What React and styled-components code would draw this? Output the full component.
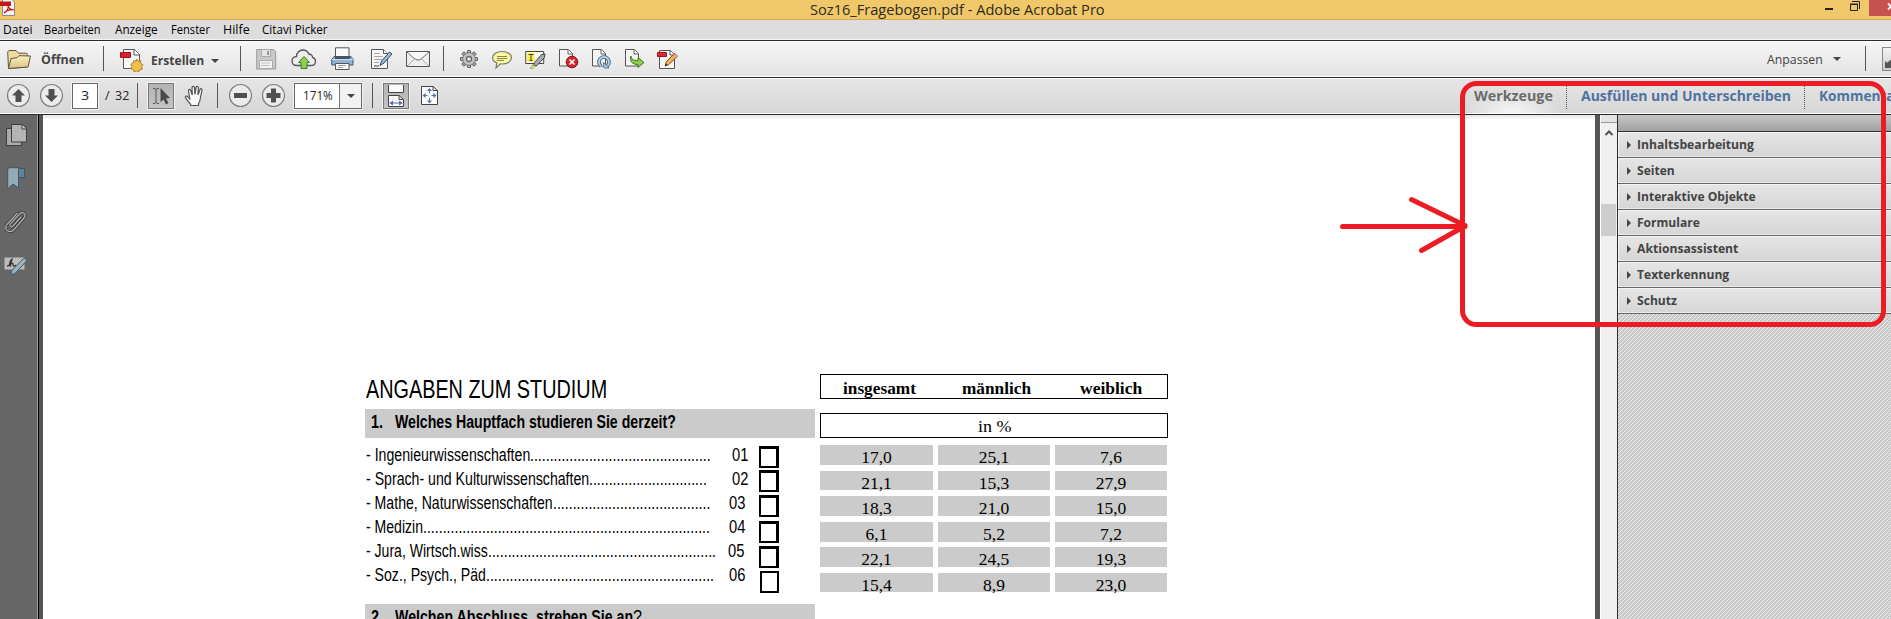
import React, { useLayoutEffect, useRef, useState } from "react";
import styled, { createGlobalStyle } from "styled-components";

const UI = '"Open Sans", "Noto Sans", sans-serif';
const NARROW = '"Liberation Sans Narrow", "Liberation Sans", sans-serif';
const SERIF = '"Liberation Serif", serif';

const Global = createGlobalStyle`
  * { box-sizing: border-box; }
  body { margin: 0; overflow: hidden; font-family: ${UI}; }
`;

/* ---------- text fitted to a given width ---------- */

const FitBox = styled.span`
  display: block;
  flex: none;
  width: ${(p) => p.$w}px;
  margin-left: ${(p) => p.$gap || 0}px;
  font-family: ${(p) => p.$font || UI};
  font-size: ${(p) => p.$size}px;
  font-weight: ${(p) => p.$weight || 400};
  line-height: ${(p) => p.$line}px;
  color: ${(p) => p.$color || "#000"};
  white-space: pre;
`;
const FitInner = styled.span`
  display: inline-block;
  transform-origin: 0 50%;
`;

function Fit({ w, gap, font, size, weight, line, color, children }) {
  const ref = useRef(null);
  const [scale, setScale] = useState(1);
  useLayoutEffect(() => {
    setScale(w / ref.current.offsetWidth);
  }, [w, children]);
  return (
    <FitBox $w={w} $gap={gap} $font={font} $size={size} $weight={weight} $line={line} $color={color}>
      <FitInner ref={ref} style={{ transform: `scaleX(${scale})` }}>{children}</FitInner>
    </FitBox>
  );
}

/* ---------- window frame ---------- */

const Window = styled.div`
  position: relative;
  width: 1891px;
  height: 619px;
  overflow: hidden;
  display: flex;
  flex-direction: column;
  background: #fff;
`;
const TitleBar = styled.header`
  display: flex;
  flex: none;
  height: 20px;
  background: #f0c869;
  border-bottom: 1px solid #d8a953;
`;
const MenuBar = styled.nav`
  display: flex;
  flex: none;
  height: 20px;
  background: #ddd;
  border-bottom: 1px solid #f4f4f4;
`;
const Toolbar = styled.div`
  display: flex;
  align-items: flex-start;
  flex: none;
  height: ${(p) => p.$h}px;
  border-top: 1px solid #2b2b2b;
  box-shadow: inset 0 1px #fff, inset 0 -1px #fff;
  background: linear-gradient(${(p) => p.$from}, ${(p) => p.$to});
`;
const Divider = styled.i`
  flex: none;
  width: 1px;
  height: 25px;
  margin: 5px 0 0 ${(p) => p.$gap}px;
  background: #555;
`;
const DottedDivider = styled.i`
  flex: none;
  width: 1px;
  height: 23px;
  margin: 8px 0 0 ${(p) => p.$gap}px;
  background: repeating-linear-gradient(#555 0 1px, transparent 1px 2px);
`;
const Icon = styled.svg`
  display: block;
  flex: none;
  margin: ${(p) => p.$top || 0}px 0 0 ${(p) => p.$gap || 0}px;
`;
const Caret = styled.i`
  flex: none;
  align-self: flex-start;
  margin: ${(p) => p.$top}px 0 0 ${(p) => p.$gap}px;
  border: solid transparent;
  border-width: 4px 4px 0;
  border-top-color: #444;
`;
const CloseButton = styled.div`
  flex: none;
  width: 22px;
  height: 16px;
  margin-left: 9px;
  background: #c75050;
`;
const HistoryButton = styled.div`
  flex: none;
  width: 10px;
  height: 24px;
  margin: 6px 0 0 16px;
  border: 1px solid #888;
  border-right: 0;
  background: linear-gradient(#f4f4f4, #ccc);
`;
const Field = styled.div`
  display: flex;
  flex: none;
  width: ${(p) => p.$w}px;
  height: 26px;
  margin: 5px 0 0 ${(p) => p.$gap}px;
  border: 1px solid #666;
  outline: 1px solid #f3f3f3;
  background: #fff;
`;
const FieldDrop = styled.div`
  display: flex;
  width: 23px;
  height: 24px;
  margin-left: 6px;
  border-left: 1px solid #777;
  background: #f2f2f2;
`;
const PressedTool = styled.div`
  flex: none;
  width: 26px;
  height: 26px;
  margin: 5px 0 0 ${(p) => p.$gap}px;
  border: 1px solid #777;
  outline: 1px solid #f3f3f3;
  background: linear-gradient(#b4b4b4, #c4c4c4);
`;
const ActiveTab = styled.div`
  display: flex;
  flex: none;
  width: 102px;
  height: 35px;
  margin-left: 1022px;
  background: radial-gradient(ellipse 50px 22px at 51px 36px, #f8f8f8, transparent);
`;

/* ---------- work area ---------- */

const Work = styled.main`
  display: flex;
  flex: none;
  height: 505px;
  border-top: 1px solid #2b2b2b;
`;
const Rail = styled.aside`
  flex: none;
  width: 39px;
  background: #666;
  border-right: 1px solid #000;
  box-shadow: inset -1px 0 #a0a0a0;
`;
const Canvas = styled.div`
  display: flex;
  flex: none;
  width: 1561px;
  padding: 0 5px 0 4px;
  background: #555;
`;
const Page = styled.article`
  display: flex;
  align-items: flex-start;
  width: 1552px;
  height: 504px;
  padding-left: 322px;
  overflow: hidden;
  background: linear-gradient(#e6e6e6, #fff 5px);
`;
const Scrollbar = styled.div`
  flex: none;
  width: 17px;
  height: 504px;
  background: #f0f0f0;
  border-left: 1px solid #fff;
`;
const Splitter = styled.div`
  height: 8px;
  background: #e4e4e4;
  border-bottom: 1px solid #999;
`;
const Thumb = styled.div`
  width: 15px;
  height: 32px;
  margin-top: 65px;
  background: #cdcdcd;
`;
const Panel = styled.aside`
  flex: 1;
  border-left: 1px solid #2b2b2b;
`;
const PanelHead = styled.div`
  height: 17px;
  background: linear-gradient(#c6c6c6, #a2a2a2);
  border-bottom: 1px solid #333;
`;
const PanelItem = styled.div`
  display: flex;
  height: 26px;
  background: linear-gradient(#e6e6e6, #d5d5d5);
  border-bottom: 1px solid #666;
  box-shadow: inset 1px 1px #f4f4f4, inset 0 -1px #ececec;
`;
const ItemArrow = styled.i`
  align-self: flex-start;
  margin: 9px 0 0 9px;
  border: solid transparent;
  border-width: 4px 0 4px 4px;
  border-left-color: #444;
`;
const Hatch = styled.svg`
  display: block;
  width: 273px;
  height: 305px;
`;

/* ---------- questionnaire ---------- */

const Form = styled.section`
  width: 450px;
  padding-top: 259px;
`;
const Heading = styled.div`
  height: 35px;
`;
const Question = styled.div`
  display: flex;
  height: 29px;
  padding-left: 6px;
  background: #cbcbcb;
`;
const Answers = styled.div`
  display: flex;
  height: 166px;
`;
const AnswerList = styled.div`
  width: 394px;
  padding-top: 5px;
`;
const Answer = styled.div`
  display: flex;
  height: 24px;
`;
const Boxes = styled.div`
  padding-top: 8px;
`;
const Box = styled.div`
  width: ${(p) => (p.$last ? 19 : 20)}px;
  height: 22px;
  margin-left: ${(p) => (p.$last ? 1 : 0)}px;
  margin-bottom: ${(p) => p.$after}px;
  border: solid #000;
  border-width: ${(p) => (p.$last ? "2px" : "3px 3px 2px 2px")};
`;
const Results = styled.section`
  width: 348px;
  margin-left: 5px;
  padding-top: 259px;
`;
const Frame = styled.div`
  display: flex;
  height: 25px;
  border: 1px solid #000;
  margin-bottom: ${(p) => p.$after}px;
`;
const ResultRow = styled.div`
  display: grid;
  grid-template-columns: 113px 112px 112px;
  grid-template-rows: ${(p) => p.$h}px;
  column-gap: 5px;
  height: ${(p) => p.$h}px;
  margin-bottom: ${(p) => p.$after}px;
`;
const Cell = styled.div`
  background: #cbcbcb;
  font: 17.5px/24px ${SERIF};
  text-align: center;
`;

const Annotation = styled.svg`
  position: absolute;
  left: 0;
  top: 0;
  pointer-events: none;
`;

/* ---------- icon drawings ---------- */

const INK = "#555";

const Sheet = ({ x = 0, y = 0 }) => (
  <g transform={`translate(${x} ${y})`}>
    <path d="M.5.5h9l4 4v12.500h-13z" fill="#f4f4f4" stroke={INK} />
    <path d="M9 .5v4.500h4.500" fill="#fff" stroke={INK} strokeWidth=".9" />
  </g>
);

const AppIcon = () => (
  <Icon width="16" height="16" viewBox="0 0 16 16">
    <path d="M2.500 -1h9l3 3v13.500h-12z" fill="#f8f4f4" stroke="#888" />
    <path d="M0 1.500h11v4.500H0z" fill="#c4161c" />
    <path d="M4 13c4-2 5-6 4-9 0 4 3 6 6 6-3-1-7 0-10 3z" fill="none" stroke="#b11" strokeWidth="1.200" />
  </Icon>
);
const FolderIcon = () => (
  <Icon $gap={7} $top={6} width="25" height="24" viewBox="0 0 25 24">
    <defs>
      <linearGradient id="fold" x2="0" y2="1"><stop stopColor="#fbf0c0" /><stop offset="1" stopColor="#dcc283" /></linearGradient>
    </defs>
    <path d="M1.500 21.500 .7 5 2 3.500h7l2.500 2.700h8l.8 1V20z" fill="#eedc9f" stroke="#5d5640" />
    <path d="M1.500 21.500 4 11.500l6-.8 2-2L23.500 9l-2.500 11z" fill="url(#fold)" stroke="#5d5640" />
  </Icon>
);
const CreateIcon = () => (
  <Icon $gap={16} $top={6} width="24" height="25" viewBox="0 0 24 25">
    <path d="M3.500 2.500h11l5 5v14h-16z" fill="#f8f8f8" stroke={INK} />
    <path d="M14 2.500v5.500h5.500" fill="#fff" stroke={INK} />
    <path d="M.5 5.500h10v5H.5z" fill="#d9222a" stroke="#a0151b" />
    <path d="m16.500 12 1.500 2.300 2.700-.6v2.700l2.300 1.400-1.500 2 .8 2.400-2.600.6-1 2.200-2.200-1.200-2.400 1-.8-2.300-2.400-.8 1-2.300-1-2.200 2.300-1.200.6-2.300 2.200.5z" fill="#f2c14a" stroke="#a87c25" strokeWidth=".9" />
  </Icon>
);
const SaveIcon = () => (
  <Icon $gap={15} $top={6} width="21" height="24" viewBox="0 0 21 24">
    <path d="M.7 2.500h17l2 2v17.500H.7z" fill="#c9c9c9" stroke="#999" />
    <path d="M5.500 2.500h9v7h-9z" fill="#e6e6e6" stroke="#aaa" />
    <path d="M11 4h2v4h-2z" fill="#999" />
    <path d="M3.500 13.500h13v8h-13z" fill="#f2f2f2" stroke="#aaa" />
    <path d="M5.500 16h9M5.500 18.500h9" stroke="#aaa" strokeDasharray="2 1" />
  </Icon>
);
const CloudIcon = () => (
  <Icon $gap={14} $top={6} width="26" height="24" viewBox="0 0 26 24">
    <path d="M6 18.500C2.500 18.500 1 16.500 1 14s2-4.500 4.500-4.500C5.500 5.500 8.500 3 12 3c3 0 5 1.800 6 4.300 2-.3 3.500 1.200 3.500 3 2 .5 3 2 3 4 0 2.500-1.500 4.200-4 4.200z" fill="#eee" stroke={INK} strokeWidth="1.300" />
    <path d="m13 9.500 5.500 6H16v6h-6v-6H7.500z" fill="#8fd14f" stroke="#3d7a1d" />
  </Icon>
);
const PrintIcon = () => (
  <Icon $gap={14} $top={6} width="23" height="24" viewBox="0 0 23 24">
    <path d="M4.500.8h13.500v10H4.500z" fill="#fafafa" stroke={INK} />
    <path d="M3 9.500h17l2 3V18H.8v-5.500z" fill="#8eb4d6" stroke="#3d5874" />
    <path d="M1 12.500h21" stroke="#c7def0" />
    <path d="M4 11h15" stroke="#333" strokeWidth="1.500" />
    <path d="M4.500 16.500h13.500v6H4.500z" fill="#fafafa" stroke={INK} />
    <path d="M7 18.500h8M7 20.500h5" stroke="#999" />
  </Icon>
);
const SignIcon = () => (
  <Icon $gap={17} $top={6} width="22" height="24" viewBox="0 0 22 24">
    <path d="M.5 2.500h12l4 4v15H.5z" fill="#f6f6f6" stroke={INK} />
    <path d="M12.500 2.500v4h4" fill="#fff" stroke={INK} />
    <path d="M3 6.500h6M3 9.500h9M3 12.500h8M3 15.500h5" stroke="#aaa" />
    <path d="M3 19.500c2-2 3 1 5-1" fill="none" stroke="#333" />
    <path d="m9 18.500 1.500-4.500L18.500 5l2.500 2-8 9z" fill="#93b7d8" stroke="#35506c" />
  </Icon>
);
const MailIcon = () => (
  <Icon $gap={13} $top={6} width="25" height="24" viewBox="0 0 25 24">
    <path d="M.5 4.500h23v15H.5z" fill="#efefef" stroke={INK} />
    <path d="m1 19 8.500-8M23 19l-8.500-8" stroke="#aaa" />
    <path d="M1 5c4 3.500 8 8 11 8s7-4.500 11-8" fill="#f8f8f8" stroke="#666" />
  </Icon>
);
const GearIcon = () => (
  <Icon $gap={16} $top={6} width="19" height="24" viewBox="0 0 19 24">
    {[0, 45, 90, 135].map((a) => (
      <path key={a} d="M7.500 3.500h3v17h-3z" transform={`rotate(${a} 9 12)`} fill="#bbb" stroke="#666" />
    ))}
    <circle cx="9" cy="12" r="6.300" fill="#bdbdbd" stroke="#666" />
    <circle cx="9" cy="12" r="5.800" fill="#c2c2c2" />
    <circle cx="9" cy="12" r="2.500" fill="#eee" stroke="#666" strokeWidth="1.300" />
  </Icon>
);
const CommentIcon = () => (
  <Icon $gap={13} $top={6} width="21" height="24" viewBox="0 0 21 24">
    <path d="M10 4.500c5.500 0 9.500 2.700 9.500 6.200s-4 6.300-9.500 6.300l-1.500-.1-4.500 4 .8-5C2 14.800.6 13 .6 10.700.6 7.200 4.500 4.500 10 4.500z" fill="#fbf8a0" stroke="#777" strokeWidth="1.200" />
    <path d="M5 9.500h10M5 11.500h10M5 13.500h7" stroke="#8a8550" />
  </Icon>
);
const HighlightIcon = () => (
  <Icon $gap={12} $top={6} width="21" height="24" viewBox="0 0 21 24">
    <path d="M.7 4.500h18v12H.7z" fill="#fff" stroke="#444" />
    <path d="M2 6h7.500v8.500H2z" fill="#ffef3a" />
    <path d="M3.500 7.500h5M6 7.500v6M4.500 13.500h3" stroke="#444" />
    <path d="m8 19 1.500-3.500 7-8 3.500-.5-.5 3.500-7.500 8z" fill="#a9a9a9" stroke="#444" />
    <path d="m5 21.500 3-4 2 2-2 2z" fill="#e6e33a" stroke="#888" strokeWidth=".6" />
  </Icon>
);
const DeleteIcon = () => (
  <Icon $gap={13} $top={6} width="20" height="24" viewBox="0 0 20 24">
    <Sheet x={0} y={2} />
    <circle cx="13" cy="15" r="5.800" fill="#d8232a" stroke="#8d1216" />
    <path d="m10.500 12.500 5 5m0-5-5 5" stroke="#fff" strokeWidth="1.600" />
  </Icon>
);
const RotateIcon = () => (
  <Icon $gap={13} $top={6} width="20" height="24" viewBox="0 0 20 24">
    <Sheet x={0} y={2} />
    <path d="M9 19a5 5 0 1 1 6 0" fill="none" stroke="#3f6486" strokeWidth="3.600" />
    <path d="M9 19a5 5 0 1 1 6 0" fill="none" stroke="#b5d3ea" strokeWidth="1.800" />
    <path d="m11.500 15.500.5 5.500h5z" fill="#b5d3ea" stroke="#3f6486" strokeWidth=".8" />
  </Icon>
);
const ExtractIcon = () => (
  <Icon $gap={13} $top={6} width="20" height="24" viewBox="0 0 20 24">
    <Sheet x={0} y={2} />
    <path d="M6 9c0 3 2 4.500 7 4.500v-3l6 5-6 5v-3C7.500 17.500 4 14 6 9z" fill="#8fcc4c" stroke="#3a741c" />
  </Icon>
);
const EditPdfIcon = () => (
  <Icon $gap={12} $top={6} width="21" height="24" viewBox="0 0 21 24">
    <path d="M2.500 3.500h11l4 4v14h-15z" fill="#f8f8f8" stroke={INK} />
    <path d="M13 3.500v4.500h4.500" fill="#fff" stroke={INK} />
    <path d="M.5 5.500h9v4h-9z" fill="#e3263a" stroke="#a0151b" />
    <path d="m8 19 1.500-4.500 8-8 3 2.500-8.500 8.500z" fill="#f0b15b" stroke="#7c4f1d" />
    <path d="m8 19 .8-2.500 1.500 1.500z" fill="#222" />
    <path d="m16 8 3 2.500 1.500-1.500-3-2.500z" fill="#e79a93" />
  </Icon>
);

const ROUND_SHAPES = {
  up: "M12 5.500 18.500 12H15v6.500H9V12H5.500z",
  down: "M12 18.500 18.500 12H15V5.500H9V12H5.500z",
  minus: "M5.500 9.500h13v5h-13z",
  plus: "M9.500 5h5v4.500H19v5h-4.500V19h-5v-4.500H5v-5h4.500z",
};
const RoundIcon = ({ kind, gap }) => (
  <Icon $gap={gap} $top={5} width="24" height="25" viewBox="-.5 -.5 24 25">
    <circle cx="12" cy="12" r="11" fill="#ececec" stroke="#808080" strokeWidth="1.200" />
    <path d={ROUND_SHAPES[kind]} fill="#505050" />
  </Icon>
);
const SelectIcon = () => (
  <svg width="24" height="24" viewBox="0 0 24 24" display="block">
    <path d="M4 4.500h2l1 1 1-1h2M7 5v14M4 19.500h2l1-1 1 1h2" fill="none" stroke="#555" />
    <path d="M11.500 4v14l3-2.500 2.500 5 2.500-1.500-2.500-4.500 4-.5z" fill="#4a4a4a" />
  </svg>
);
const HandIcon = () => (
  <Icon $gap={10} $top={7} width="21" height="22" viewBox="0 0 21 22">
    <path d="M7 20.500c0-2-4-4.500-5.500-8-.5-1.500 1.500-2 2.500-.5l2 2.500L4.500 6c-.3-1.800 1.800-2.200 2.200-.5L8.300 10 8 2.800c0-1.800 2.300-1.800 2.500 0l.5 6.700L12 2.500c.3-1.700 2.400-1.400 2.300.3L14 10l2-5.500c.6-1.500 2.400-.8 2 .8L16.500 12c-.3 3-.5 5-2 6.500v2z" fill="#fafafa" stroke="#555" strokeWidth="1.200" />
  </Icon>
);
const FitWidthIcon = () => (
  <svg width="24" height="24" viewBox="0 0 24 24" display="block">
    <path d="M4.500 1v7.500h15V1" fill="#fafafa" stroke="#444" />
    <path d="M4.500 22.500v-11H15l4.500 4v7z" fill="#fafafa" stroke="#444" />
    <path d="M15 11.500v4h4.500" fill="none" stroke="#444" />
    <path d="M6 19h12" stroke="#5570b0" />
    <path d="m9 16.500-3.500 2.500L9 21.500zM15 16.500l3.500 2.500-3.500 2.500z" fill="#5570b0" />
  </svg>
);
const FitPageIcon = () => (
  <Icon $gap={12} $top={7} width="18" height="21" viewBox="0 0 18 21">
    <path d="M.5 1.500H12l4.500 4V19.500H.5z" fill="#fafafa" stroke="#444" />
    <path d="M12 1.500v4h4.500" fill="none" stroke="#444" />
    <path d="M8.500 4v4.500M8.500 13v4.500M2.500 10.500h4M10.500 10.500h4" stroke="#5570b0" />
    <path d="m6 6 2.500-3L11 6zM6 15.500l2.500 3 2.500-3zM4.500 8l-3 2.500 3 2.500zM12.500 8l3 2.500-3 2.500z" fill="#5570b0" />
  </Icon>
);

const PagesIcon = () => (
  <Icon $gap={6} $top={9} width="22" height="24" viewBox="0 0 22 24">
    <path d="M.5 4.500h15v17H.5z" fill="#aaa" stroke="#3c3c3c" />
    <path d="M5.500.5h11l4 4v13.500h-15z" fill="#b4b4b4" stroke="#3c3c3c" />
    <path d="M16 1v4h4.500" fill="#ccc" stroke="#3c3c3c" />
  </Icon>
);
const BookmarkIcon = () => (
  <Icon $gap={7} $top={19} width="18" height="24" viewBox="0 0 18 24">
    <path d="M11 1.500h6.500v9H11z" fill="#5f8397" stroke="#3f5664" />
    <path d="M.7 3C.7 1 2 .7 3.500.7H13C11.500 1 11.500 2 11.500 3v18L6 17 .7 22z" fill="#94aab6" stroke="#3f5664" />
  </Icon>
);
const CLIP = "M16 7 8 16c-2 2-4-.3-2.500-2.200L14 4.500c3.500-4 8-.5 5 3.500L9 19.500c-4.500 5-10.500 0-7-5L12 3.500";
const ClipIcon = () => (
  <Icon $gap={5} $top={19} width="22" height="24" viewBox="0 0 22 24">
    <g fill="none" strokeLinecap="round">
      <path d={CLIP} stroke="#3c3c3c" strokeWidth="2.800" />
      <path d={CLIP} stroke="#b4b4b4" strokeWidth="1.200" />
    </g>
  </Icon>
);
const SignatureIcon = () => (
  <Icon $gap={4} $top={22} width="24" height="20" viewBox="0 0 24 20">
    <path d="M.5 1.500h20v12H.5z" fill="#bcbcbc" />
    <path d="M3 10c3 0 5-5 5-7-2 1-3 6-2 7 1-3 3-4 3-1 0 2 2 1 3 0" fill="none" stroke="#333" strokeWidth="1.300" />
    <path d="m7 19 1-4.500L19 3l4-1-1 3.500L11.500 17z" fill="#9eb2c0" stroke="#465a68" />
  </Icon>
);

/* ---------- data ---------- */

const MENUS = [
  ["Datei", 3, 29], ["Bearbeiten", 12, 57], ["Anzeige", 14, 43],
  ["Fenster", 13, 39], ["Hilfe", 13, 27], ["Citavi Picker", 12, 66],
];
const TOOLS = [
  ["Inhaltsbearbeitung", 117], ["Seiten", 38], ["Interaktive Objekte", 119],
  ["Formulare", 63], ["Aktionsassistent", 101], ["Texterkennung", 92], ["Schutz", 40],
];
/* label, label width, dot count, dots width, gap before code, code */
const ANSWERS = [
  ["- Ingenieurwissenschaften", 164, 46, 181, 21, "01"],
  ["- Sprach- und Kulturwissenschaften", 223, 30, 118, 25, "02"],
  ["- Mathe, Naturwissenschaften", 187, 40, 157, 19, "03"],
  ["- Medizin", 57, 73, 287, 19, "04"],
  ["- Jura, Wirtsch.wiss", 122, 58, 228, 12, "05"],
  ["- Soz., Psych., Päd", 120, 58, 228, 15, "06"],
];
const BOX_GAPS = [2, 3, 4, 3, 3, 0];
const RESULTS = [
  [20, 6, "17,0", "25,1", "7,6"],
  [19, 6, "21,1", "15,3", "27,9"],
  [20, 6, "18,3", "21,0", "15,0"],
  [20, 5, "6,1", "5,2", "7,2"],
  [20, 6, "22,1", "24,5", "19,3"],
  [19, 0, "15,4", "8,9", "23,0"],
];

export default function App() {
  const ui = { size: 12.5, line: 35, color: "#222" };
  const doc = { font: NARROW, size: 17.5, line: 24 };
  const q = { font: NARROW, size: 18, line: 27, weight: 700 };
  const head = { font: SERIF, size: 17.5, line: 26, weight: 700 };
  return (
    <Window>
      <Global />
      <TitleBar>
        <AppIcon />
        <Fit gap={794} w={295} size={15} line={18} color="#2f2a1c">Soz16_Fragebogen.pdf - Adobe Acrobat Pro</Fit>
        <Icon $gap={719} $top={0} width="36" height="16" viewBox="0 0 36 16">
          <path d="M1 8h8v2H1z" fill="#222" />
          <path d="M26.500 4.500h7v6h-7zM26 4h8M28 1.500h7.500V9" fill="none" stroke="#222" />
        </Icon>
        <CloseButton>
          <Icon width="22" height="16" viewBox="0 0 22 16">
            <path d="m19 3.500 6 6m0-6-6 6" stroke="#fff" strokeWidth="1.800" />
          </Icon>
        </CloseButton>
      </TitleBar>

      <MenuBar>
        {MENUS.map(([name, gap, w]) => (
          <Fit key={name} gap={gap} w={w} size={12} line={19}>{name}</Fit>
        ))}
      </MenuBar>

      <Toolbar $h={37} $from="#f5f5f5" $to="#e3e3e3">
        <FolderIcon />
        <Fit gap={9} w={43} size={13} weight={700} line={36} color="#444">Öffnen</Fit>
        <Divider $gap={19} />
        <CreateIcon />
        <Fit gap={7} w={53} size={13} weight={700} line={38} color="#444">Erstellen</Fit>
        <Caret $gap={7} $top={18} />
        <Divider $gap={21} />
        <SaveIcon />
        <CloudIcon />
        <PrintIcon />
        <SignIcon />
        <MailIcon />
        <Divider $gap={12} />
        <GearIcon />
        <CommentIcon />
        <HighlightIcon />
        <DeleteIcon />
        <RotateIcon />
        <ExtractIcon />
        <EditPdfIcon />
        <Fit gap={1089} w={56} size={12.5} line={37} color="#444">Anpassen</Fit>
        <Caret $gap={10} $top={16} />
        <Divider $gap={24} />
        <HistoryButton>
          <Icon width="9" height="22" viewBox="0 0 9 22">
            <path d="M2 20v-6l1-1 1 2 2-2 3-2v9z" fill="#555" />
          </Icon>
        </HistoryButton>
      </Toolbar>

      <Toolbar $h={37} $from="#e6e6e6" $to="#d6d6d6">
        <RoundIcon kind="up" gap={6} />
        <RoundIcon kind="down" gap={9} />
        <Field $gap={9} $w={26}>
          <Fit gap={8} w={8} {...ui} line={24}>3</Fit>
        </Field>
        <Fit gap={7} w={5} {...ui}>/</Fit>
        <Fit gap={5} w={14} {...ui}>32</Fit>
        <Divider $gap={8} />
        <PressedTool $gap={10}><SelectIcon /></PressedTool>
        <HandIcon />
        <Divider $gap={12} />
        <RoundIcon kind="minus" gap={10} />
        <RoundIcon kind="plus" gap={9} />
        <Field $gap={9} $w={68}>
          <Fit gap={8} w={30} {...ui} line={24}>171%</Fit>
          <FieldDrop><Caret $gap={7} $top={10} /></FieldDrop>
        </Field>
        <Divider $gap={10} />
        <PressedTool $gap={10}><FitWidthIcon /></PressedTool>
        <FitPageIcon />
        <ActiveTab>
          <Fit gap={13} w={79} size={15} weight={700} line={35} color="#6b6b6b">Werkzeuge</Fit>
        </ActiveTab>
        <DottedDivider $gap={3} />
        <Fit gap={14} w={210} size={15} weight={700} line={35} color="#4f72a1">Ausfüllen und Unterschreiben</Fit>
        <DottedDivider $gap={13} />
        <Fit gap={14} w={82} size={15} weight={700} line={35} color="#4f72a1">Kommentar</Fit>
      </Toolbar>

      <Work>
        <Rail>
          <PagesIcon />
          <BookmarkIcon />
          <ClipIcon />
          <SignatureIcon />
        </Rail>
        <Canvas>
          <Page>
            <Form>
              <Heading>
                <Fit gap={1} w={241} font={NARROW} size={25} line={30}>ANGABEN ZUM STUDIUM</Fit>
              </Heading>
              <Question>
                <Fit w={12} {...q}>1.</Fit>
                <Fit gap={12} w={281} {...q}>Welches Hauptfach studieren Sie derzeit?</Fit>
              </Question>
              <Answers>
                <AnswerList>
                  {ANSWERS.map(([label, w, n, dw, gap, code]) => (
                    <Answer key={code}>
                      <Fit gap={1} w={w} {...doc}>{label}</Fit>
                      <Fit w={dw} {...doc}>{".".repeat(n)}</Fit>
                      <Fit gap={gap} w={16} {...doc}>{code}</Fit>
                    </Answer>
                  ))}
                </AnswerList>
                <Boxes>
                  {BOX_GAPS.map((after, i) => <Box key={i} $after={after} $last={i === 5} />)}
                </Boxes>
              </Answers>
              <Question>
                <Fit w={12} {...q}>2.</Fit>
                <Fit gap={12} w={238} {...q}>Welchen Abschluss, streben Sie an</Fit>
                <Fit w={9} {...q} weight={400}>?</Fit>
              </Question>
            </Form>
            <Results>
              <Frame $after={14}>
                <Fit gap={22} w={73} {...head}>insgesamt</Fit>
                <Fit gap={46} w={69} {...head}>männlich</Fit>
                <Fit gap={49} w={62} {...head}>weiblich</Fit>
              </Frame>
              <Frame $after={7}>
                <Fit gap={157} w={34} font={SERIF} size={17.5} line={24}>in %</Fit>
              </Frame>
              {RESULTS.map(([h, after, ...values]) => (
                <ResultRow key={values[0]} $h={h} $after={after}>
                  {values.map((v) => <Cell key={v}>{v}</Cell>)}
                </ResultRow>
              ))}
            </Results>
          </Page>
        </Canvas>
        <Scrollbar>
          <Splitter />
          <Icon $gap={3} $top={5} width="10" height="11" viewBox="0 0 10 11">
            <path d="m1.500 7 3.500-3.500L8.500 7" fill="none" stroke="#505050" strokeWidth="2" />
          </Icon>
          <Thumb />
        </Scrollbar>
        <Panel>
          <PanelHead />
          {TOOLS.map(([name, w]) => (
            <PanelItem key={name}>
              <ItemArrow />
              <Fit gap={6} w={w} size={13} weight={700} line={24} color="#444">{name}</Fit>
            </PanelItem>
          ))}
          <Hatch>
            <defs>
              <pattern id="hatch" width="4" height="4" patternUnits="userSpaceOnUse">
                <path d="M0 0h4v4H0z" fill="#c8c8c8" />
                <path d="M-1 1 1-1M0 4 4 0M3 5l2-2" stroke="#f4f4f4" strokeWidth=".9" />
              </pattern>
            </defs>
            <rect width="273" height="305" fill="url(#hatch)" />
          </Hatch>
        </Panel>
      </Work>

      <Annotation width="1891" height="619" viewBox="0 0 1891 619" fill="none" stroke="#ed1c24" strokeWidth="5" strokeLinecap="round">
        <rect x="1462.500" y="83.500" width="421" height="241" rx="14" />
        <path d="M1342.500 226.500H1465M1411.500 199.500 1465 225.500M1421.500 250.500 1465 226" />
      </Annotation>
    </Window>
  );
}
